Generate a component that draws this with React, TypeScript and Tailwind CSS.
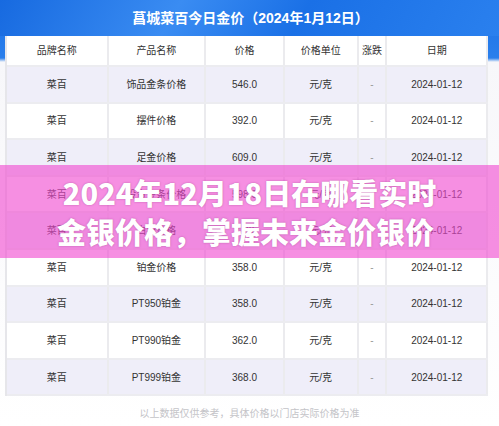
import React from "react";

const cols = ["w-[102px]", "w-[98px]", "w-[79px]", "w-[74px]", "w-[29px]", "w-[101px]"];

const header = ["品牌名称", "产品名称", "价格", "价格单位", "涨跌", "日期"];

const rows: string[][] = [
  ["菜百", "饰品金条价格", "546.0", "元/克", "-", "2024-01-12"],
  ["菜百", "摆件价格", "392.0", "元/克", "-", "2024-01-12"],
  ["菜百", "足金价格", "609.0", "元/克", "-", "2024-01-12"],
  ["菜百", "投资金条价格", "598.0", "元/克", "-", "2024-01-12"],
  ["菜百", "白银价格", "7.20", "元/克", "-", "2024-01-12"],
  ["菜百", "铂金价格", "358.0", "元/克", "-", "2024-01-12"],
  ["菜百", "PT950铂金", "358.0", "元/克", "-", "2024-01-12"],
  ["菜百", "PT990铂金", "362.0", "元/克", "-", "2024-01-12"],
  ["菜百", "PT999铂金", "368.0", "元/克", "-", "2024-01-12"],
];

function Row({ cells, bg, h, head }: { cells: string[]; bg: string; h: string; head?: boolean }) {
  return (
    <div className={`flex ${h} border-b-2 border-[#ececf0]`}>
      {cells.map((c, i) => (
        <div
          key={i}
          className={`${cols[i]} ${bg} flex items-center justify-center border-r-2 border-[#ebebee] text-[10px] ${
            i === 4 && !head ? "text-[#999]" : "text-[#333]"
          }`}
        >
          {c}
        </div>
      ))}
    </div>
  );
}

export default function App() {
  return (
    <div
      className="relative w-[499px] h-[426px] overflow-hidden bg-[linear-gradient(to_bottom,#1a70e6_0px,#2a7fec_58px,#f7f7fa_62px,#ffffff_100%)]"
      style={{ fontFamily: "'Liberation Sans', 'Noto Sans CJK SC', sans-serif" }}
    >
      <div className="h-[36px] flex items-center justify-center bg-[linear-gradient(120deg,#176ae0_0%,#3a8cf2_35%,#1a70e6_60%,#2a80ee_100%)]">
        <span className="text-white text-[14px] font-bold pl-[2px]">菖城菜百今日金价（2024年1月12日）</span>
      </div>

      <div className="ml-[5px] w-[483px] bg-white border-l-2 border-[#e6e6ea]">
        <Row cells={header} bg="bg-white" h="h-[31px]" head />
        {rows.map((r, i) => (
          <Row key={i} cells={r} bg={i % 2 === 0 ? "bg-[#efeef9]" : "bg-white"} h="h-[36.6px]" />
        ))}
      </div>

      <div className="flex justify-center pt-[10px]">
        <span className="text-[10px] text-[#c4c4c8]">以上数据仅供参考，具体价格以门店实际价格为准</span>
      </div>

      <div className="absolute left-0 top-[165px] w-[499px] h-[93px] bg-[rgba(240,75,208,0.62)] flex flex-col items-center justify-center">
        <div
          className="text-white font-black text-[29px] leading-[39px] [text-shadow:0_0_2px_rgba(150,60,130,0.6)]"
          style={{ fontFamily: "'Noto Sans CJK SC', sans-serif" }}
        >
          2024年12月18日在哪看实时
        </div>
        <div
          className="text-white font-black text-[29px] leading-[39px] pr-[8px] [text-shadow:0_0_2px_rgba(150,60,130,0.6)]"
          style={{ fontFamily: "'Noto Sans CJK SC', sans-serif" }}
        >
          金银价格，掌握未来金价银价
        </div>
      </div>
    </div>
  );
}
